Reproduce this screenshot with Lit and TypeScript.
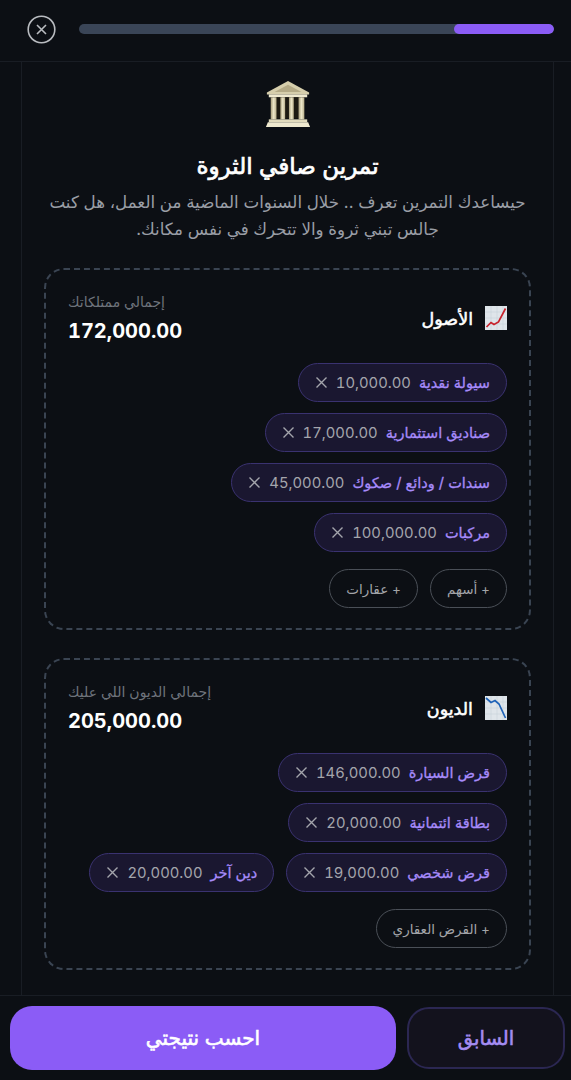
import { LitElement, html, css, svg } from "lit";
import { customElement } from "lit/decorators.js";

type Item = { label: string; value: string };
type Section = {
  icon: "up" | "down";
  title: string;
  totalLabel: string;
  total: string;
  items: Item[];
  adds: string[];
};

const SECTIONS: Section[] = [
  {
    icon: "up",
    title: "الأصول",
    totalLabel: "إجمالي ممتلكاتك",
    total: "172,000.00",
    items: [
      { label: "سيولة نقدية", value: "10,000.00" },
      { label: "صناديق استثمارية", value: "17,000.00" },
      { label: "سندات / ودائع / صكوك", value: "45,000.00" },
      { label: "مركبات", value: "100,000.00" },
    ],
    adds: ["+ أسهم", "+ عقارات"],
  },
  {
    icon: "down",
    title: "الديون",
    totalLabel: "إجمالي الديون اللي عليك",
    total: "205,000.00",
    items: [
      { label: "قرض السيارة", value: "146,000.00" },
      { label: "بطاقة ائتمانية", value: "20,000.00" },
      { label: "قرض شخصي", value: "19,000.00" },
      { label: "دين آخر", value: "20,000.00" },
    ],
    adds: ["+ القرض العقاري"],
  },
];

const chart = (kind: "up" | "down") => html`<svg class="chart" viewBox="0 0 22 24" aria-hidden="true">
  <rect x="0" y="0" width="22" height="24" fill="#dfe5ea" />
  ${svg`<g stroke="#c3cdd6" stroke-width="0.5">
    <path d="M0 6H22M0 12H22M0 18H22M6 0V24M12 0V24M18 0V24" />
  </g>`}
  ${kind === "up"
    ? svg`<path d="M1.5 21 L6 16.5 L9 18.5 L13.5 16 L20.5 2.5" fill="none" stroke="#c8232c" stroke-width="1.7" stroke-linejoin="miter" />`
    : svg`<path d="M1 2 L6 6.5 L10 4.5 L14 8 L20.5 22" fill="none" stroke="#1f63b8" stroke-width="1.7" stroke-linejoin="miter" />`}
</svg>`;

@customElement("app-root")
export class AppRoot extends LitElement {
  static styles = css`
    :host {
      display: flex;
      flex-direction: column;
      height: 1080px;
      width: 571px;
      overflow: hidden;
      background: #0c0f14;
      color: #fff;
      font-family: "Inter", "Noto Sans", "DejaVu Sans", sans-serif;
    }
    .top {
      flex: none;
      height: 62px;
      box-sizing: border-box;
      border-bottom: 1px solid #191d24;
      display: flex;
      align-items: center;
      gap: 23px;
      padding: 0 17px 3px 27px;
    }
    .close {
      flex: none;
      width: 29px;
      height: 29px;
      display: block;
    }
    .track {
      flex: 1;
      height: 10px;
      border-radius: 5px;
      background: #3a4557;
      overflow: hidden;
      display: flex;
      justify-content: flex-end;
    }
    .fill {
      height: 100%;
      border-radius: 5px;
      background: #8b5cf6;
    }
    .main {
      flex: 1;
      min-height: 0;
      margin: 0 17px 0 21px;
      border-left: 1px solid #191d24;
      border-right: 1px solid #191d24;
      padding: 18px 22px 0;
      display: flex;
      flex-direction: column;
      align-items: stretch;
      overflow: hidden;
    }
    .hero {
      display: block;
      flex: none;
      width: 48px;
      height: 48px;
      align-self: center;
    }
    h1 {
      margin: 21px 0 0;
      font-size: 23px;
      line-height: 34px;
      font-weight: 400;
      -webkit-text-stroke: 0.7px #fff;
      text-align: center;
    }
    .lead {
      margin: 6px -6px 0;
      font-size: 16.7px;
      line-height: 27px;
      color: #9a9ea6;
      text-align: center;
    }
    .card {
      flex: none;
      box-sizing: border-box;
      border: 2px dashed #3a4452;
      border-radius: 20px;
      padding: 22px 22px 20px;
      margin-top: 28px;
      direction: rtl;
    }
    .lead + .card {
      margin-top: 25px;
    }
    .head {
      display: flex;
      justify-content: space-between;
      align-items: center;
      height: 52px;
    }
    .name {
      display: flex;
      align-items: center;
      gap: 12px;
      font-size: 17.5px;
      font-weight: 400;
      -webkit-text-stroke: 0.55px #fff;
    }
    .chart {
      width: 22px;
      height: 24px;
      display: block;
    }
    .sum {
      display: flex;
      flex-direction: column;
      align-items: flex-end;
      gap: 6px;
    }
    .sum-label {
      font-size: 14px;
      line-height: 20px;
      color: #6f747c;
    }
    .sum-value {
      font-size: 20px;
      line-height: 26px;
      font-weight: 700;
      font-variant-numeric: tabular-nums;
      direction: ltr;
    }
    .pills {
      display: flex;
      flex-wrap: wrap;
      gap: 11px 12px;
      margin-top: 19px;
    }
    .pill {
      box-sizing: border-box;
      height: 39px;
      border-radius: 20px;
      border: 1px solid #3a3270;
      background: #1a1730;
      display: flex;
      align-items: center;
      gap: 8px;
      padding: 0 16px;
      font-size: 14.5px;
      white-space: nowrap;
    }
    .pill b {
      font-weight: 400;
      color: #a78bfa;
      -webkit-text-stroke: 0.3px #a78bfa;
    }
    .pill span {
      color: #a4a5ac;
      direction: ltr;
      font-size: 14.8px;
      font-variant-numeric: tabular-nums;
    }
    .x {
      width: 13px;
      height: 13px;
      display: block;
    }
    .adds {
      display: flex;
      flex-wrap: wrap;
      gap: 12px;
      margin-top: 17px;
    }
    .add {
      box-sizing: border-box;
      height: 39px;
      border-radius: 20px;
      border: 1px solid #4a4f57;
      display: flex;
      align-items: center;
      padding: 0 16px;
      font-size: 13.5px;
      color: #a3a5a9;
      white-space: nowrap;
    }
    .bottom {
      flex: none;
      height: 85px;
      box-sizing: border-box;
      border-top: 1px solid #191d24;
      display: flex;
      gap: 11px;
      padding: 10px 6px 10px 10px;
      align-items: flex-start;
    }
    .primary {
      flex: none;
      width: 386px;
      height: 64px;
      border: 0;
      border-radius: 22px;
      background: #8b5cf6;
      color: #fff;
      font: inherit;
      font-size: 20px;
      font-weight: 400;
      -webkit-text-stroke: 0.6px #fff;
    }
    .secondary {
      flex: 1;
      height: 62px;
      margin-top: 1px;
      box-sizing: border-box;
      border: 2px solid #2b2752;
      border-radius: 22px;
      background: #13121d;
      color: #a48cf2;
      font: inherit;
      font-size: 19.5px;
      font-weight: 400;
      -webkit-text-stroke: 0.6px #a48cf2;
    }
  `;

  private xIcon() {
    return html`<svg class="x" viewBox="0 0 13 13" aria-hidden="true">
      <path d="M1.5 1.5 11.5 11.5M11.5 1.5 1.5 11.5" stroke="#a4a5ac" stroke-width="1.4" fill="none" />
    </svg>`;
  }

  private renderCard(s: Section) {
    return html`<section class="card">
      <div class="head">
        <div class="name">${chart(s.icon)}<span>${s.title}</span></div>
        <div class="sum">
          <div class="sum-label">${s.totalLabel}</div>
          <div class="sum-value">${s.total}</div>
        </div>
      </div>
      <div class="pills">
        ${s.items.map(
          (i) => html`<div class="pill"><b>${i.label}</b><span>${i.value}</span>${this.xIcon()}</div>`
        )}
      </div>
      <div class="adds">${s.adds.map((a) => html`<div class="add">${a}</div>`)}</div>
    </section>`;
  }

  render() {
    return html`
      <header class="top">
        <svg class="close" viewBox="0 0 29 29" aria-label="إغلاق">
          <circle cx="14.5" cy="14.5" r="13.3" fill="none" stroke="#b9bcc0" stroke-width="1.6" />
          <path d="M10 10 19 19M19 10 10 19" stroke="#b9bcc0" stroke-width="1.6" fill="none" />
        </svg>
        <div class="track"><div class="fill" style="width:21%"></div></div>
      </header>
      <main class="main">
        <svg class="hero" viewBox="0 0 48 50" aria-hidden="true">
          <defs>
            <linearGradient id="col" x1="0" x2="1" y1="0" y2="0">
              <stop offset="0" stop-color="#a89e7c" />
              <stop offset=".5" stop-color="#ece6c8" />
              <stop offset="1" stop-color="#b9af8c" />
            </linearGradient>
          </defs>
          <path d="M24 1 46 13V15H2V13Z" fill="#d6ceac" />
          <path d="M24 5 38 12.5H10Z" fill="#b4aa86" />
          <rect x="4" y="15" width="40" height="3" fill="#efe9cf" />
          <rect x="7" y="18" width="34" height="22" fill="#1d1a12" />
          <rect x="6" y="18" width="6" height="23" fill="url(#col)" />
          <rect x="16" y="18" width="5" height="23" fill="url(#col)" />
          <rect x="25" y="18" width="5" height="23" fill="url(#col)" />
          <rect x="35" y="18" width="6" height="23" fill="url(#col)" />
          <rect x="4" y="41" width="40" height="3" fill="#e2dbbc" />
          <path d="M3 44H45L47 49H1Z" fill="#efe9cf" />
        </svg>
        <h1 dir="rtl">تمرين صافي الثروة</h1>
        <p class="lead" dir="rtl">
          حيساعدك التمرين تعرف .. خلال السنوات الماضية من العمل، هل كنت<br />جالس تبني ثروة والا تتحرك في نفس مكانك.
        </p>
        ${SECTIONS.map((s) => this.renderCard(s))}
      </main>
      <footer class="bottom">
        <button class="primary" dir="rtl">احسب نتيجتي</button>
        <button class="secondary" dir="rtl">السابق</button>
      </footer>
    `;
  }
}
